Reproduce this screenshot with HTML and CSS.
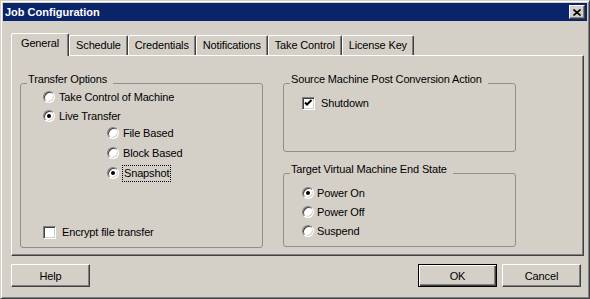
FILE: index.html
```html
<!DOCTYPE html>
<html lang="en">
<head>
    <meta charset="UTF-8">
    <title>Job Configuration</title>
    <link rel="stylesheet" href="styles.css">
</head>
<body>
    <div class="window">
        <div class="titlebar">
            <span class="title">Job Configuration</span>
            <button class="close-btn" aria-label="Close">
                <svg width="8" height="7" viewBox="0 0 8 7"><path d="M0.5 0.5 L7.5 6.5 M7.5 0.5 L0.5 6.5" stroke="#000" stroke-width="1.6" fill="none"/></svg>
            </button>
        </div>

        <div class="dialog-body">
            <div class="tabs">
                <div class="tab active">General</div>
                <div class="tab">Schedule</div>
                <div class="tab">Credentials</div>
                <div class="tab">Notifications</div>
                <div class="tab">Take Control</div>
                <div class="tab">License Key</div>
            </div>

            <div class="panel">
                <div class="group transfer">
                    <div class="group-title">Transfer Options</div>
                    <div class="option"><span class="radio"></span>Take Control of Machine</div>
                    <div class="option"><span class="radio on"></span>Live Transfer</div>
                    <div class="sub-options">
                        <div class="option"><span class="radio"></span>File Based</div>
                        <div class="option"><span class="radio"></span>Block Based</div>
                        <div class="option"><span class="radio on"></span><span class="focus">Snapshot</span></div>
                    </div>
                    <div class="option check-row encrypt"><span class="check"></span>Encrypt file transfer</div>
                </div>

                <div class="right-column">
                    <div class="group source">
                        <div class="group-title">Source Machine Post Conversion Action</div>
                        <div class="option check-row first">
                            <span class="check">
                                <svg width="11" height="11" viewBox="0 0 11 11"><path d="M2 4.5 L4 6.5 L8.5 2" stroke="#000" stroke-width="2" fill="none"/></svg>
                            </span>Shutdown
                        </div>
                    </div>

                    <div class="group target">
                        <div class="group-title">Target Virtual Machine End State</div>
                        <div class="option tight first"><span class="radio on"></span>Power On</div>
                        <div class="option tight"><span class="radio"></span>Power Off</div>
                        <div class="option tight"><span class="radio"></span>Suspend</div>
                    </div>
                </div>
            </div>

            <div class="actions">
                <button class="btn">Help</button>
                <button class="btn default">OK</button>
                <button class="btn">Cancel</button>
            </div>
        </div>
    </div>
</body>
</html>
```

FILE: styles.css
```css
:root {
    --face: #d4d0c8;
    --shadow: #808080;
    --dark: #404040;
    --light: #ffffff;
    --title-bg: #0a246a;
    --group-line: #8f8f8f;
}

* {
    margin: 0;
    padding: 0;
    box-sizing: border-box;
}

body {
    background: var(--face);
    font-family: "Liberation Sans", sans-serif;
    font-size: 11px;
    letter-spacing: -0.15px;
    line-height: 16px;
    color: #000;
}

.window {
    width: 590px;
    height: 299px;
    border: 1px solid;
    border-color: var(--face) var(--dark) var(--dark) var(--face);
    box-shadow: inset 1px 1px var(--light), inset -1px -1px var(--shadow);
    padding: 2px;
}

.titlebar {
    height: 18px;
    background: var(--title-bg);
    display: flex;
    align-items: center;
    justify-content: space-between;
    padding: 0 2px;
}

.title {
    color: #fff;
    font-weight: bold;
    font-size: 11px;
    letter-spacing: 0;
}

.close-btn {
    width: 16px;
    height: 14px;
    background: var(--face);
    border: 1px solid;
    border-color: var(--light) var(--dark) var(--dark) var(--light);
    box-shadow: inset -1px -1px var(--shadow);
    display: flex;
    align-items: center;
    justify-content: center;
}

.dialog-body {
    padding: 12px 0 0 8px;
}

/* Tabs */
.tabs {
    display: flex;
    align-items: flex-end;
    height: 22px;
    position: relative;
    z-index: 1;
}

.tab {
    height: 20px;
    padding: 0 6px;
    line-height: 18px;
    background: var(--face);
    border: 1px solid;
    border-bottom: none;
    border-color: var(--light) var(--dark) transparent var(--light);
    border-radius: 2px 2px 0 0;
    box-shadow: inset -1px 0 var(--shadow);
}

.tab.active {
    height: 23px;
    margin-bottom: -1px;
    padding: 0 9px;
    line-height: 19px;
}

.panel {
    width: 573px;
    height: 201px;
    border: 1px solid;
    border-color: var(--light) var(--dark) var(--dark) var(--light);
    box-shadow: inset -1px -1px var(--shadow);
    padding: 27px 0 0 8px;
    display: flex;
    gap: 20px;
    align-items: flex-start;
}

/* Group boxes */
.group {
    --indent: 18px;
    border: 1px solid var(--group-line);
    border-radius: 3px;
    display: flex;
    flex-direction: column;
    padding-left: var(--indent);
}

.group-title {
    margin: -12px 0 0 calc(6px - var(--indent));
    padding: 0 6px 0 1px;
    width: fit-content;
    line-height: 14px;
    background: var(--face);
}

.transfer {
    --indent: 22px;
    width: 243px;
    height: 165px;
    padding-bottom: 7px;
}

.right-column {
    display: flex;
    flex-direction: column;
    gap: 21px;
}

.source,
.target {
    width: 233px;
}

.source {
    height: 69px;
}

.target {
    height: 74px;
}

.option {
    display: flex;
    align-items: center;
    gap: 4px;
    height: 16px;
    margin-top: 3px;
    white-space: nowrap;
}

.source .option.first,
.target .option.first {
    margin-top: 9px;
}

.option.tight {
    gap: 3px;
}

.check-row {
    gap: 6px;
}

.sub-options {
    padding-left: 64px;
    display: flex;
    flex-direction: column;
    gap: 4px;
    margin-top: 1px;
}

.sub-options .option {
    margin-top: 0;
}

.encrypt {
    margin-top: auto;
}

.radio {
    flex: none;
    width: 12px;
    height: 12px;
    border-radius: 50%;
    background: #fff;
    border: 1px solid;
    border-color: var(--shadow) var(--light) var(--light) var(--shadow);
    box-shadow: inset 1px 1px var(--dark), inset -1px -1px var(--face);
    display: flex;
    align-items: center;
    justify-content: center;
}

.radio.on::after {
    content: "";
    width: 4px;
    height: 4px;
    border-radius: 50%;
    background: #000;
}

.check {
    flex: none;
    width: 13px;
    height: 13px;
    background: #fff;
    border: 1px solid;
    border-color: var(--shadow) var(--light) var(--light) var(--shadow);
    box-shadow: inset 1px 1px var(--dark), inset -1px -1px var(--face);
    display: flex;
}

.focus {
    outline: 1px dotted #000;
    padding: 0 1px;
    line-height: 15px;
}

/* Bottom buttons */
.actions {
    width: 573px;
    display: flex;
    gap: 5px;
    margin-top: 8px;
    padding-right: 3px;
}

.btn {
    width: 79px;
    height: 23px;
    font: inherit;
    letter-spacing: inherit;
    background: var(--face);
    border: 1px solid;
    border-color: var(--light) var(--dark) var(--dark) var(--light);
    box-shadow: inset -1px -1px var(--shadow);
}

.btn.default {
    margin-left: auto;
    border-color: #000;
    box-shadow: inset 1px 1px var(--light), inset -1px -1px var(--dark), inset -2px -2px var(--shadow);
}
```
